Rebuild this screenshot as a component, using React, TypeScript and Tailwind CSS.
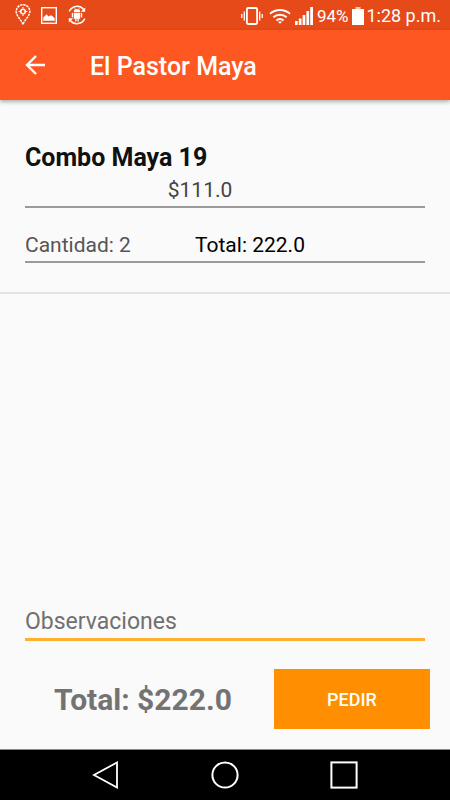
import React, { useState } from 'react';

interface OrderItem {
  name: string;
  price: number;
  quantity: number;
}

const item: OrderItem = { name: 'Combo Maya 19', price: 111, quantity: 2 };

const money = (value: number) => value.toFixed(1);

const PinIcon = () => (
  <svg width="16" height="22" viewBox="0 0 16 22" fill="none" stroke="white">
    <path d="M8 20.5C6.5 16 1.2 12 1.2 7.5a6.8 6.8 0 0 1 13.6 0C14.8 12 9.5 16 8 20.5z" strokeWidth="1.5" strokeDasharray="2.4 0.8" />
    <circle cx="8" cy="7.5" r="2.3" strokeWidth="1.5" />
    <path d="M8 3v1.6M8 10.4V12M3.6 7.5h1.6M10.8 7.5h1.6" strokeWidth="1.2" />
  </svg>
);

const PictureIcon = () => (
  <svg width="16" height="17" viewBox="0 0 16 17">
    <rect x="0.7" y="0.7" width="14.6" height="15.6" fill="none" stroke="white" strokeWidth="1.4" />
    <path d="M2.3 13.8v-3.3l3.3-3.3 2 2.4 1.6-1.2 1.6.2 2.9 2.6v2.6z" fill="white" />
  </svg>
);

const DroidSyncIcon = () => (
  <svg width="20" height="20" viewBox="0 0 20 20" fill="none" stroke="white">
    <path d="M2.2 6.4C5 .6 12.6-.4 16.4 4.2M17.8 13.6c-2.8 5.8-10.4 6.8-14.2 2.2" strokeWidth="1.5" />
    <path d="M18.2 2.6v4.2h-4.4zM1.8 17.4v-4.2h4.4z" fill="white" stroke="none" />
    <path d="M6.8 7a3.2 3 0 0 1 6.4 0zM6.8 7.7h6.4v6.1h-1.4v2.6h-1.3v-2.6h-1v2.6H8.2v-2.6H6.8zM4.8 8h1.3v4.2H4.8zM13.9 8h1.3v4.2h-1.3z" fill="white" stroke="none" />
    <path d="M7.6 3.2l.8 1.4M12.4 3.2l-.8 1.4" strokeWidth="0.8" />
  </svg>
);

const VibrateIcon = () => (
  <svg width="22" height="20" viewBox="0 0 22 20" fill="none" stroke="white">
    <rect x="5.9" y="2" width="10.2" height="16" rx="1.2" strokeWidth="1.8" />
    <path d="M3.3 5.5v9M18.7 5.5v9M.8 8v4M21.2 8v4" strokeWidth="1.3" />
  </svg>
);

const WifiIcon = () => (
  <svg width="22" height="16" viewBox="0 0 22 16" fill="none" stroke="white" strokeWidth="2">
    <path d="M1 5.8c5.6-5.2 14.4-5.2 20 0M4.4 9.2c3.8-3.4 9.4-3.4 13.2 0M7.4 12.4c2.2-1.8 5-1.8 7.2 0" />
    <path d="M9 13.8c1.3-.8 2.7-.8 4 0L11 15.8z" fill="white" stroke="none" />
  </svg>
);

const SignalIcon = () => (
  <svg width="18" height="18" viewBox="0 0 18 18" fill="white">
    <path d="M0 14h2.7v4H0zM3.8 11.5h2.7V18H3.8zM7.6 8h2.7v10H7.6zM11.4 4h2.7v14h-2.7zM15.2 0H18v18h-2.8z" />
  </svg>
);

const BatteryIcon = () => (
  <svg width="12" height="18" viewBox="0 0 12 18" fill="white">
    <path d="M3.5 0h5v2h-5z" fillOpacity="0.7" />
    <path d="M0 2h12v16H0z" />
  </svg>
);

const StatusBar = () => (
  <div className="flex h-[30px] items-center justify-between bg-[#e64a19] pl-[15px] pr-[9px] text-white">
    <div className="flex items-center gap-[10px]">
      <PinIcon />
      <PictureIcon />
      <DroidSyncIcon />
    </div>
    <div className="flex items-center gap-1 pt-0.5">
      <div className="flex items-center gap-1.5">
        <VibrateIcon />
        <WifiIcon />
      </div>
      <SignalIcon />
      <span className="text-[17px] leading-5">94%</span>
      <div className="flex items-center gap-0.5">
        <BatteryIcon />
        <span className="text-[18px] leading-5">1:28 p.m.</span>
      </div>
    </div>
  </div>
);

const AppBar = () => (
  <header className="flex h-[70px] items-center gap-[43px] bg-[#ff5722] px-6 text-white shadow-[0_2px_4px_rgba(0,0,0,0.3)]">
    <button aria-label="Atrás">
      <svg width="23" height="22" viewBox="0 0 23 22" fill="none" stroke="white" strokeWidth="2.4">
        <path d="M21 11H3M12 2L3 11l9 9" />
      </svg>
    </button>
    <h1 className="pt-1 text-[25px] font-medium leading-8">El Pastor Maya</h1>
  </header>
);

const NavBar = () => (
  <nav className="flex h-[51px] items-center justify-center gap-[91px] border-t border-[#888] bg-black">
    <button aria-label="Atrás">
      <svg width="28" height="28" viewBox="0 0 28 28" fill="none" stroke="white" strokeWidth="1.8">
        <path d="M25 1.5v25L2 14z" />
      </svg>
    </button>
    <button aria-label="Inicio">
      <svg width="28" height="28" viewBox="0 0 28 28" fill="none" stroke="white" strokeWidth="2">
        <circle cx="14" cy="14" r="12.6" />
      </svg>
    </button>
    <button aria-label="Recientes">
      <svg width="28" height="28" viewBox="0 0 28 28" fill="none" stroke="white" strokeWidth="2">
        <rect x="1.4" y="1.4" width="25.2" height="25.2" />
      </svg>
    </button>
  </nav>
);

export default function App() {
  const [notes, setNotes] = useState('');
  const total = item.price * item.quantity;

  return (
    <div className="flex min-h-screen flex-col bg-[#fafafa] font-[Roboto,sans-serif]">
      <StatusBar />
      <AppBar />

      <main className="flex flex-1 flex-col">
        {/* Order line */}
        <section className="border-b-2 border-[#e2e2e2] px-[25px] pb-[29px] pt-[42px]">
          <h2 className="text-[25px] font-bold leading-8 text-[#111]">{item.name}</h2>
          <p className="border-b-2 border-[#9a9a9a] pr-[50px] text-center text-[21px] leading-8 text-[#444]">
            ${money(item.price)}
          </p>
          <div className="mt-[21px] flex border-b-2 border-[#9a9a9a] text-[21px] leading-8">
            <span className="w-[170px] text-[#555]">Cantidad: {item.quantity}</span>
            <span className="text-black">Total: {money(total)}</span>
          </div>
        </section>

        {/* Notes and checkout */}
        <form className="mt-auto" onSubmit={(e) => e.preventDefault()}>
          <div className="px-[25px]">
            <input
              type="text"
              aria-label="Observaciones"
              placeholder="Observaciones"
              value={notes}
              onChange={(e) => setNotes(e.target.value)}
              className="block w-full border-b-[3px] border-[#ffb02e] text-[23px] leading-8 outline-none placeholder:text-[#707070]"
            />
          </div>
          <div className="flex items-center gap-5 px-5 pb-5 pt-7">
            <p className="h-[60px] flex-1 pl-3 text-center text-[30px] font-bold leading-[62px] text-[#737373]">
              Total: ${money(total)}
            </p>
            <button type="submit" className="h-[60px] w-[156px] bg-[#ff8f00] text-[18px] font-medium text-white">
              PEDIR
            </button>
          </div>
        </form>
      </main>

      <NavBar />
    </div>
  );
}
